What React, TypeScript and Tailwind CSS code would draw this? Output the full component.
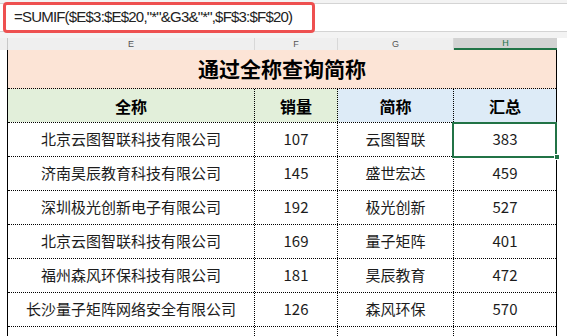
import React from "react"

const rows = [
  { full: "北京云图智联科技有限公司", qty: 107, short: "云图智联", total: 383 },
  { full: "济南昊辰教育科技有限公司", qty: 145, short: "盛世宏达", total: 459 },
  { full: "深圳极光创新电子有限公司", qty: 192, short: "极光创新", total: 527 },
  { full: "北京云图智联科技有限公司", qty: 169, short: "量子矩阵", total: 401 },
  { full: "福州森风环保科技有限公司", qty: 181, short: "昊辰教育", total: 472 },
  { full: "长沙量子矩阵网络安全有限公司", qty: 126, short: "森风环保", total: 570 },
  { full: "杭州盛世宏达国际贸易有限公司", qty: 138, short: "", total: 0 },
]

const font = { fontFamily: '"Noto Sans CJK SC", "Microsoft YaHei", sans-serif' }

export default function App() {
  return (
    <div className="h-[336px] w-[567px] overflow-hidden bg-white text-[#1c1c1c]" style={font}>
      {/* formula bar */}
      <div className="relative h-[38px] bg-[#f3f3f3] pt-[3px]">
        <div className="h-[29px] border-y border-[#d4d4d4] bg-white" />
        <div className="absolute left-[3px] top-[2px] flex h-[31px] w-[312px] items-center rounded-[4px] border-[3px] border-[#ee5050] bg-white pl-[8px]">
          <span
            className="whitespace-nowrap text-[15px] tracking-[-0.8px] text-[#222]"
            style={{ fontFamily: '"Liberation Sans", Arial, sans-serif' }}
          >
            =SUMIF($E$3:$E$20,"*"&amp;G3&amp;"*",$F$3:$F$20)
          </span>
        </div>
      </div>

      {/* column letters */}
      <div className="flex h-[12px] bg-[#efefef] text-[9px] leading-[12px] text-[#555]" style={{ fontFamily: '"Liberation Sans", Arial, sans-serif' }}>
        <div className="w-[8px] border-r border-[#c8c8c8]" />
        <div className="w-[247px] border-r border-[#d8d8d8] text-center">E</div>
        <div className="w-[83px] border-r border-[#d8d8d8] text-center">F</div>
        <div className="w-[116px] border-r border-[#d8d8d8] text-center">G</div>
        <div className="w-[103px] border-b-2 border-[#217346] bg-[#d2d2d2] text-center leading-[10px] text-[#217346]">H</div>
        <div className="flex-1 bg-white" />
      </div>

      <div className="flex">
        <div className="w-[7px]" />
        <div className="w-[550px] border-x border-black">
          {/* title */}
          <div className="flex h-[39px] items-center justify-center border-b border-dotted border-black bg-[#fce4d6] text-[21px] font-bold text-black">
            通过全称查询简称
          </div>
          {/* header */}
          <div className="grid h-[34px] grid-cols-[247px_83px_116px_102px] border-b border-dotted border-black text-[16px] font-bold text-black">
            <div className="flex items-center justify-center border-r border-dotted border-black bg-[#e2efda]">全称</div>
            <div className="flex items-center justify-center border-r border-dotted border-black bg-[#e2efda]">销量</div>
            <div className="flex items-center justify-center border-r border-dotted border-black bg-[#ddebf7]">简称</div>
            <div className="flex items-center justify-center bg-[#ddebf7]">汇总</div>
          </div>
          {rows.map((r, i) => (
            <div
              key={i}
              className="grid h-[34px] grid-cols-[247px_83px_116px_102px] border-b border-dotted border-black text-[15px]"
            >
              <div className="flex items-center justify-center border-r border-dotted border-black">{r.full}</div>
              <div className="flex items-center justify-center border-r border-dotted border-black">{r.qty}</div>
              <div className="flex items-center justify-center border-r border-dotted border-black">{r.short}</div>
              <div className="relative flex items-center justify-center">
                {r.total > 0 && r.total}
                {i === 0 && (
                  <>
                    <div className="absolute -left-[2px] -top-px bottom-[-2px] right-[-1px] border-2 border-[#217346]" />
                    <div className="absolute bottom-[-4px] right-[-4px] h-[6px] w-[6px] border border-white bg-[#217346]" />
                  </>
                )}
              </div>
            </div>
          ))}
        </div>
      </div>
    </div>
  )
}
